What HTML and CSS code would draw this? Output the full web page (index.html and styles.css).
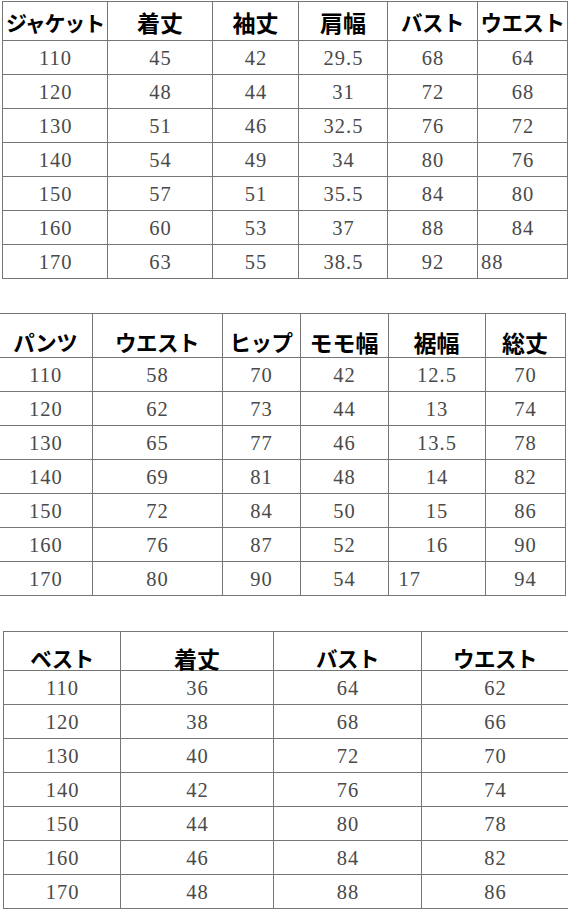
FILE: index.html
```html
<!DOCTYPE html>
<html lang="ja">
<head>
<meta charset="utf-8">
<title>サイズ表</title>
<link rel="stylesheet" href="styles.css">
</head>
<body>
<main class="page">
  <table class="size t1">
    <colgroup><col class="c1"><col class="c2"><col class="c3"><col class="c4"><col class="c5"><col class="c6"></colgroup>
    <thead>
      <tr><th class="narrow">ジャケット</th><th class="k">着丈</th><th class="k">袖丈</th><th class="k">肩幅</th><th>バスト</th><th>ウエスト</th></tr>
    </thead>
    <tbody>
      <tr><td>110</td><td>45</td><td>42</td><td>29.5</td><td>68</td><td>64</td></tr>
      <tr><td>120</td><td>48</td><td>44</td><td>31</td><td>72</td><td>68</td></tr>
      <tr><td>130</td><td>51</td><td>46</td><td>32.5</td><td>76</td><td>72</td></tr>
      <tr><td>140</td><td>54</td><td>49</td><td>34</td><td>80</td><td>76</td></tr>
      <tr><td>150</td><td>57</td><td>51</td><td>35.5</td><td>84</td><td>80</td></tr>
      <tr><td>160</td><td>60</td><td>53</td><td>37</td><td>88</td><td>84</td></tr>
      <tr><td>170</td><td>63</td><td>55</td><td>38.5</td><td>92</td><td class="left l1">88</td></tr>
    </tbody>
  </table>

  <table class="size t2">
    <colgroup><col class="c1"><col class="c2"><col class="c3"><col class="c4"><col class="c5"><col class="c6"></colgroup>
    <thead>
      <tr><th>パンツ</th><th>ウエスト</th><th>ヒップ</th><th class="k">モモ幅</th><th class="k">裾幅</th><th class="k">総丈</th></tr>
    </thead>
    <tbody>
      <tr><td>110</td><td>58</td><td>70</td><td>42</td><td>12.5</td><td>70</td></tr>
      <tr><td>120</td><td>62</td><td>73</td><td>44</td><td>13</td><td>74</td></tr>
      <tr><td>130</td><td>65</td><td>77</td><td>46</td><td>13.5</td><td>78</td></tr>
      <tr><td>140</td><td>69</td><td>81</td><td>48</td><td>14</td><td>82</td></tr>
      <tr><td>150</td><td>72</td><td>84</td><td>50</td><td>15</td><td>86</td></tr>
      <tr><td>160</td><td>76</td><td>87</td><td>52</td><td>16</td><td>90</td></tr>
      <tr><td>170</td><td>80</td><td>90</td><td>54</td><td class="left l2">17</td><td>94</td></tr>
    </tbody>
  </table>

  <table class="size t3">
    <colgroup><col class="c1"><col class="c2"><col class="c3"><col class="c4"></colgroup>
    <thead>
      <tr><th>ベスト</th><th class="k">着丈</th><th>バスト</th><th>ウエスト</th></tr>
    </thead>
    <tbody>
      <tr><td>110</td><td>36</td><td>64</td><td>62</td></tr>
      <tr><td>120</td><td>38</td><td>68</td><td>66</td></tr>
      <tr><td>130</td><td>40</td><td>72</td><td>70</td></tr>
      <tr><td>140</td><td>42</td><td>76</td><td>74</td></tr>
      <tr><td>150</td><td>44</td><td>80</td><td>78</td></tr>
      <tr><td>160</td><td>46</td><td>84</td><td>82</td></tr>
      <tr><td>170</td><td>48</td><td>88</td><td>86</td></tr>
    </tbody>
  </table>
</main>
</body>
</html>
```

FILE: styles.css
```css
html, body {
  margin: 0;
  padding: 0;
  background: #ffffff;
}

.page {
  width: 568px;
  display: flex;
  flex-direction: column;
  align-items: flex-start;
}

.size {
  border-collapse: collapse;
  table-layout: fixed;
}

.size th,
.size td {
  border: 1px solid #767676;
  padding: 0;
  text-align: center;
  white-space: nowrap;
  overflow: visible;
}

.size th {
  font-family: "Noto Sans CJK JP", "Noto Sans", sans-serif;
  font-weight: 700;
  font-size: 21.5px;
  line-height: 24px;
  color: #000;
  letter-spacing: -0.5px;
}

.size th.k {
  font-size: 23px;
  letter-spacing: 0;
}

.size th.narrow {
  font-size: 21px;
  letter-spacing: -1.2px;
}

.size td {
  font-family: "Liberation Serif", "Times New Roman", serif;
  font-size: 20.5px;
  line-height: 20px;
  letter-spacing: 1px;
  text-indent: 1px;
  color: #4a4a4a;
  height: 33px;
}

.size td.left {
  text-align: left;
  text-indent: 0;
}

/* table 1 : ジャケット */
.t1 {
  width: 566px;
  margin: 1px 0 0 2px;
}
.t1 thead th {
  height: 36px;
  vertical-align: middle;
  padding-top: 2px;
}
.t1 .c1 { width: 105px; }
.t1 .c2 { width: 105px; }
.t1 .c3 { width: 86px; }
.t1 .c4 { width: 89px; }
.t1 .c5 { width: 90px; }
.t1 .c6 { width: 90px; }
.t1 .l1 { padding-left: 3px; }

/* table 2 : パンツ */
.t2 {
  width: 566px;
  margin: 34px 0 0 -1px;
}
.t2 th:first-child,
.t2 td:first-child {
  border-left: none;
}
.t2 thead th {
  height: 40px;
  vertical-align: bottom;
  padding-bottom: 3px;
}
.t2 .c1 { width: 93px; }
.t2 .c2 { width: 130px; }
.t2 .c3 { width: 78px; }
.t2 .c4 { width: 88px; }
.t2 .c5 { width: 97px; }
.t2 .c6 { width: 80px; }
.t2 .l2 { padding-left: 10px; }

/* table 3 : ベスト */
.t3 {
  width: 565px;
  margin: 35px 0 0 3px;
}
.t3 thead th {
  height: 38px;
  vertical-align: bottom;
  padding-bottom: 0;
}
.t3 .c1 { width: 117px; }
.t3 .c2 { width: 153px; }
.t3 .c3 { width: 148px; }
.t3 .c4 { width: 147px; }
```
